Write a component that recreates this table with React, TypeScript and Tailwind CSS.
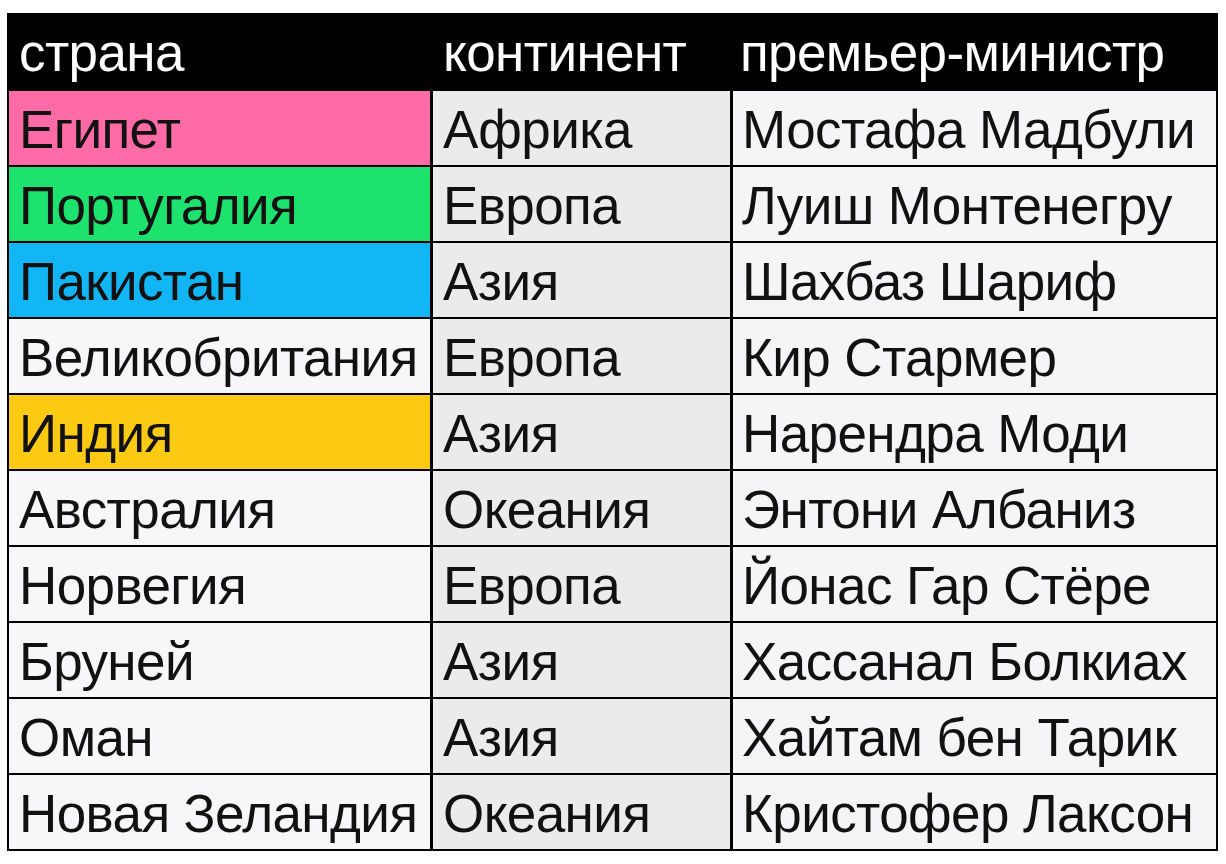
const rows: [string, string, string, string][] = [
  ["Египет", "Африка", "Мостафа Мадбули", "bg-[#ff6ba6]"],
  ["Португалия", "Европа", "Луиш Монтенегру", "bg-[#1de36e]"],
  ["Пакистан", "Азия", "Шахбаз Шариф", "bg-[#13b6f4]"],
  ["Великобритания", "Европа", "Кир Стармер", "bg-[#f7f7f9]"],
  ["Индия", "Азия", "Нарендра Моди", "bg-[#fcca12]"],
  ["Австралия", "Океания", "Энтони Албаниз", "bg-[#f7f7f9]"],
  ["Норвегия", "Европа", "Йонас Гар Стёре", "bg-[#f7f7f9]"],
  ["Бруней", "Азия", "Хассанал Болкиах", "bg-[#f7f7f9]"],
  ["Оман", "Азия", "Хайтам бен Тарик", "bg-[#f7f7f9]"],
  ["Новая Зеландия", "Океания", "Кристофер Лаксон", "bg-[#f7f7f9]"],
];

export default function App() {
  return (
    <div className="w-[1226px] h-[864px] bg-white pt-[13px] pl-[7px] font-['Liberation_Sans',Arial,sans-serif]">
      <div className="w-[1211px] bg-black p-[2px] grid grid-cols-[421px_297px_483px] gap-x-[3px] gap-y-[2px] text-[53px] leading-none tracking-[-0.6px]">
        <div className="h-[74px] flex items-center pl-[10px] text-white">страна</div>
        <div className="h-[74px] flex items-center pl-[10px] text-white">континент</div>
        <div className="h-[74px] flex items-center pl-[7px] text-white">премьер-министр</div>
        {rows.map(([country, continent, pm, bg]) => (
          <div key={country} className="contents">
            <div className={`h-[74px] flex items-center pl-[10px] pt-[2px] text-[#111] ${bg}`}>{country}</div>
            <div className="h-[74px] flex items-center pl-[10px] pt-[2px] text-[#111] bg-[#ebebeb]">{continent}</div>
            <div className="h-[74px] flex items-center pl-[9px] pt-[2px] text-[#111] bg-[#f5f5f7]">{pm}</div>
          </div>
        ))}
      </div>
    </div>
  );
}
